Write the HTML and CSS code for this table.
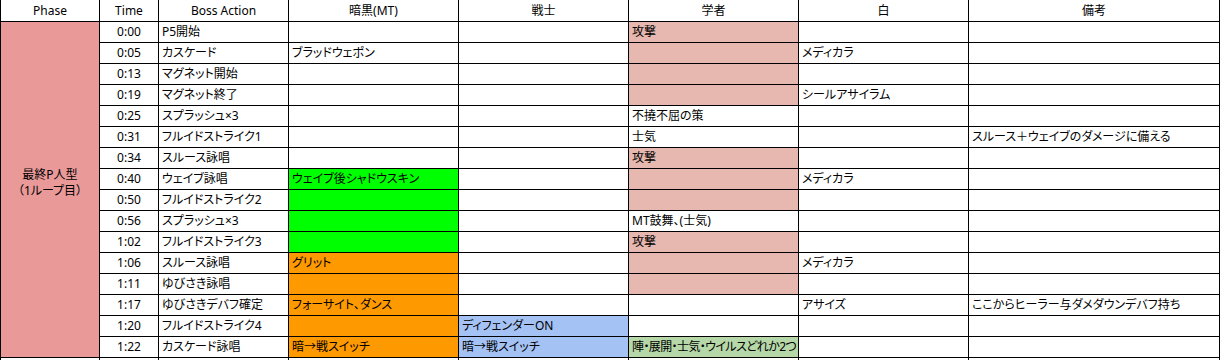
FILE: index.html
```html
<!DOCTYPE html>
<html lang="ja">
<head>
<meta charset="utf-8">
<link rel="stylesheet" href="styles.css">
</head>
<body>
<div class="sheet">
  <div class="c hd">Phase</div>
  <div class="c hd">Time</div>
  <div class="c hd">Boss Action</div>
  <div class="c hd">暗黒(MT)</div>
  <div class="c hd">戦士</div>
  <div class="c hd">学者</div>
  <div class="c hd">白</div>
  <div class="c hd">備考</div>

  <div class="c phase">最終P人型<br>（1ループ目）</div>

  <div class="c t">0:00</div><div class="c">P5開始</div><div class="c"></div><div class="c"></div><div class="c pink">攻撃</div><div class="c"></div><div class="c"></div>
  <div class="c t">0:05</div><div class="c">カスケード</div><div class="c">ブラッドウェポン</div><div class="c"></div><div class="c pink"></div><div class="c">メディカラ</div><div class="c"></div>
  <div class="c t">0:13</div><div class="c">マグネット開始</div><div class="c"></div><div class="c"></div><div class="c pink"></div><div class="c"></div><div class="c"></div>
  <div class="c t">0:19</div><div class="c">マグネット終了</div><div class="c"></div><div class="c"></div><div class="c pink"></div><div class="c">シールアサイラム</div><div class="c"></div>
  <div class="c t">0:25</div><div class="c">スプラッシュ×3</div><div class="c"></div><div class="c"></div><div class="c">不撓不屈の策</div><div class="c"></div><div class="c"></div>
  <div class="c t">0:31</div><div class="c">フルイドストライク1</div><div class="c"></div><div class="c"></div><div class="c">士気</div><div class="c"></div><div class="c">スルース＋ウェイブのダメージに備える</div>
  <div class="c t">0:34</div><div class="c">スルース詠唱</div><div class="c"></div><div class="c"></div><div class="c pink">攻撃</div><div class="c"></div><div class="c"></div>
  <div class="c t">0:40</div><div class="c">ウェイブ詠唱</div><div class="c green">ウェイブ後シャドウスキン</div><div class="c"></div><div class="c pink"></div><div class="c">メディカラ</div><div class="c"></div>
  <div class="c t">0:50</div><div class="c">フルイドストライク2</div><div class="c green"></div><div class="c"></div><div class="c pink"></div><div class="c"></div><div class="c"></div>
  <div class="c t">0:56</div><div class="c">スプラッシュ×3</div><div class="c green"></div><div class="c"></div><div class="c">MT鼓舞、(士気)</div><div class="c"></div><div class="c"></div>
  <div class="c t">1:02</div><div class="c">フルイドストライク3</div><div class="c green"></div><div class="c"></div><div class="c pink">攻撃</div><div class="c"></div><div class="c"></div>
  <div class="c t">1:06</div><div class="c">スルース詠唱</div><div class="c orange">グリット</div><div class="c"></div><div class="c pink"></div><div class="c">メディカラ</div><div class="c"></div>
  <div class="c t">1:11</div><div class="c">ゆびさき詠唱</div><div class="c orange"></div><div class="c"></div><div class="c pink"></div><div class="c"></div><div class="c"></div>
  <div class="c t">1:17</div><div class="c">ゆびさきデバフ確定</div><div class="c orange">フォーサイト、ダンス</div><div class="c"></div><div class="c"></div><div class="c">アサイズ</div><div class="c">ここからヒーラー与ダメダウンデバフ持ち</div>
  <div class="c t">1:20</div><div class="c">フルイドストライク4</div><div class="c orange"></div><div class="c blue">ディフェンダーON</div><div class="c"></div><div class="c"></div><div class="c"></div>
  <div class="c t">1:22</div><div class="c">カスケード詠唱</div><div class="c orange">暗→戦スイッチ</div><div class="c blue">暗→戦スイッチ</div><div class="c lgreen tight">陣・展開・士気・ウイルスどれか2つ</div><div class="c"></div><div class="c"></div>

  <div class="c"></div><div class="c t"></div><div class="c"></div><div class="c"></div><div class="c"></div><div class="c"></div><div class="c"></div><div class="c"></div>
</div>
</body>
</html>
```

FILE: styles.css
```css
html, body {
  margin: 0;
  padding: 0;
  background: #ffffff;
}

body {
  font-family: "Noto Sans", "Noto Sans CJK JP", sans-serif;
  font-size: 12px;
  color: #000000;
  font-feature-settings: "palt";
}

.sheet {
  display: grid;
  grid-template-columns: 98px 58px 129px 169px 169px 169px 169px 250px;
  grid-template-rows: 21px;
  grid-auto-rows: 20px;
  gap: 1px;
  padding: 0 1px 1px 1px;
  background: #000000;
  width: max-content;
}

.c {
  background: #ffffff;
  display: flex;
  align-items: center;
  padding: 0 3px;
  white-space: nowrap;
  overflow: hidden;
  line-height: 1;
}

.hd {
  justify-content: center;
}

.t {
  justify-content: center;
}

.tight {
  letter-spacing: -0.6px;
  padding-right: 0;
}

.phase {
  grid-row: 2 / span 16;
  background: #ea9999;
  justify-content: center;
  text-align: center;
  line-height: 16px;
  padding-bottom: 14px;
}

.pink { background: #e6b8af; }
.green { background: #00ff00; }
.orange { background: #ff9900; }
.blue { background: #a4c2f4; }
.lgreen { background: #b6d7a8; }
```
